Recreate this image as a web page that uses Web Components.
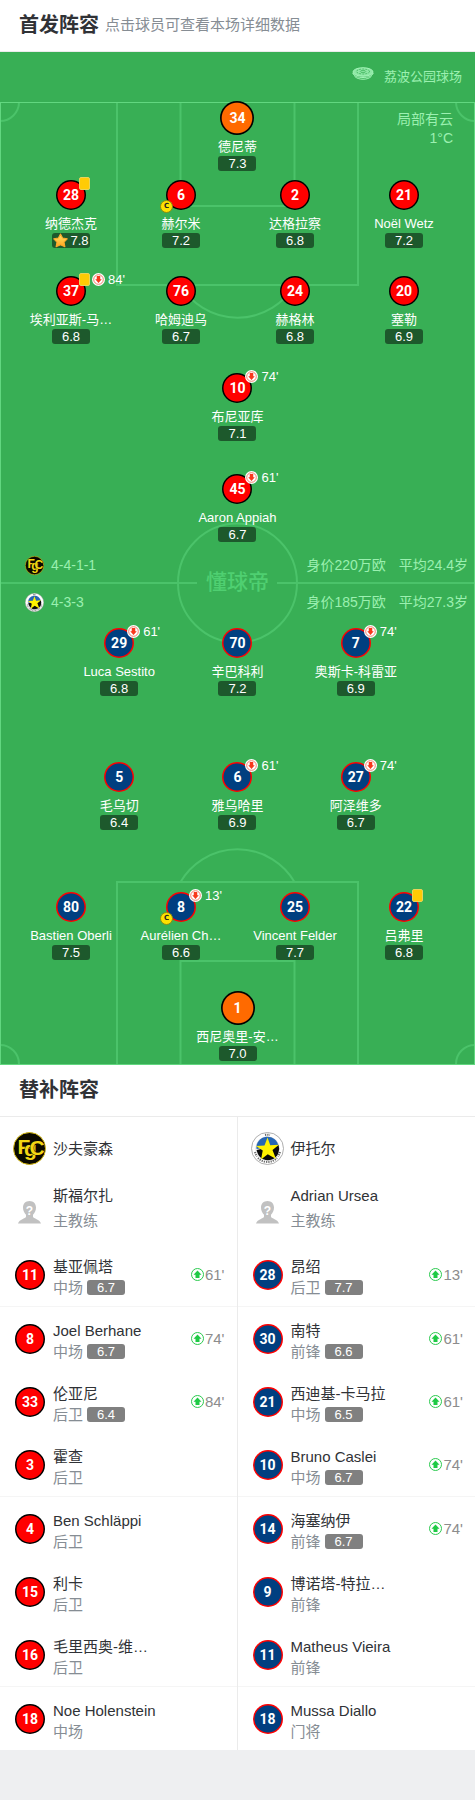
<!DOCTYPE html>
<html lang="zh-CN">
<head>
<meta charset="UTF-8">
<meta name="viewport" content="width=device-width, initial-scale=1">
<title>首发阵容</title>
<style>
  body {
    margin: 0;
    background: #eeeff1;
    color: #303236;
    font-family: "Liberation Sans", "Noto Sans CJK SC", sans-serif;
  }
</style>
</head>
<body>

<section-title>首发阵容<span slot="hint">点击球员可查看本场详细数据</span></section-title>

<lineup-pitch venue="荔波公园球场" weather="局部有云" temp="1°C">
  <pitch-half slot="home" side="home">
    <pitch-player keeper num="34" name="德尼蒂" rating="7.3"></pitch-player>
    <pitch-row cols="4">
      <pitch-player num="28" name="纳德杰克" rating="7.8" card star></pitch-player>
      <pitch-player num="6" name="赫尔米" rating="7.2" captain></pitch-player>
      <pitch-player num="2" name="达格拉察" rating="6.8"></pitch-player>
      <pitch-player num="21" name="Noël Wetz" rating="7.2"></pitch-player>
    </pitch-row>
    <pitch-row cols="4">
      <pitch-player num="37" name="埃利亚斯-马…" rating="6.8" card off="84'"></pitch-player>
      <pitch-player num="76" name="哈姆迪乌" rating="6.7"></pitch-player>
      <pitch-player num="24" name="赫格林" rating="6.8"></pitch-player>
      <pitch-player num="20" name="塞勒" rating="6.9"></pitch-player>
    </pitch-row>
    <pitch-player num="10" name="布尼亚库" rating="7.1" off="74'"></pitch-player>
    <pitch-player num="45" name="Aaron Appiah" rating="6.7" off="61'"></pitch-player>
    <team-strip logo="fcs" formation="4-4-1-1" value="身价220万欧" age="平均24.4岁"></team-strip>
  </pitch-half>

  <pitch-half slot="away" side="away">
    <team-strip logo="etoile" formation="4-3-3" value="身价185万欧" age="平均27.3岁"></team-strip>
    <pitch-row cols="3">
      <pitch-player num="29" name="Luca Sestito" rating="6.8" off="61'"></pitch-player>
      <pitch-player num="70" name="辛巴科利" rating="7.2"></pitch-player>
      <pitch-player num="7" name="奥斯卡-科雷亚" rating="6.9" off="74'"></pitch-player>
    </pitch-row>
    <pitch-row cols="3">
      <pitch-player num="5" name="毛乌切" rating="6.4"></pitch-player>
      <pitch-player num="6" name="雅乌哈里" rating="6.9" off="61'"></pitch-player>
      <pitch-player num="27" name="阿泽维多" rating="6.7" off="74'"></pitch-player>
    </pitch-row>
    <pitch-row cols="4">
      <pitch-player num="80" name="Bastien Oberli" rating="7.5"></pitch-player>
      <pitch-player num="8" name="Aurélien Ch…" rating="6.6" captain off="13'"></pitch-player>
      <pitch-player num="25" name="Vincent Felder" rating="7.7"></pitch-player>
      <pitch-player num="22" name="吕弗里" rating="6.8" card></pitch-player>
    </pitch-row>
    <pitch-player keeper num="1" name="西尼奥里-安…" rating="7.0"></pitch-player>
  </pitch-half>
</lineup-pitch>

<section-title>替补阵容</section-title>

<bench-board>
  <bench-team side="home" logo="fcs" name="沙夫豪森" coach="斯福尔扎">
    <bench-player num="11" name="基亚佩塔" role="中场" rating="6.7" on="61'"></bench-player>
    <bench-player num="8" name="Joel Berhane" role="中场" rating="6.7" on="74'"></bench-player>
    <bench-player num="33" name="伦亚尼" role="后卫" rating="6.4" on="84'"></bench-player>
    <bench-player num="3" name="霍查" role="后卫"></bench-player>
    <bench-player num="4" name="Ben Schläppi" role="后卫"></bench-player>
    <bench-player num="15" name="利卡" role="后卫"></bench-player>
    <bench-player num="16" name="毛里西奥-维…" role="后卫"></bench-player>
    <bench-player num="18" name="Noe Holenstein" role="中场"></bench-player>
  </bench-team>
  <bench-team side="away" logo="etoile" name="伊托尔" coach="Adrian Ursea">
    <bench-player num="28" name="昂绍" role="后卫" rating="7.7" on="13'"></bench-player>
    <bench-player num="30" name="南特" role="前锋" rating="6.6" on="61'"></bench-player>
    <bench-player num="21" name="西迪基-卡马拉" role="中场" rating="6.5" on="61'"></bench-player>
    <bench-player num="10" name="Bruno Caslei" role="中场" rating="6.7" on="74'"></bench-player>
    <bench-player num="14" name="海塞纳伊" role="前锋" rating="6.7" on="74'"></bench-player>
    <bench-player num="9" name="博诺塔-特拉…" role="前锋"></bench-player>
    <bench-player num="11" name="Matheus Vieira" role="前锋"></bench-player>
    <bench-player num="18" name="Mussa Diallo" role="门将"></bench-player>
  </bench-team>
</bench-board>

<script>
'use strict';

const ICONS = {
  off: `<svg viewBox="0 0 26 26"><circle cx="13" cy="13" r="13" fill="#fff"/>
    <circle cx="13" cy="13" r="9.6" fill="none" stroke="#f0705c" stroke-width="1.8"/>
    <path d="M9.500 6h7v6.500h3L13 20l-6.500-7.500h3z" fill="#f8381c"/></svg>`,
  on: `<svg viewBox="0 0 26 26"><circle cx="13" cy="13" r="12" fill="#fff" stroke="#2bc94e" stroke-width="2"/>
    <path d="M9 20h8v-6.500h4L13 5l-8 8.500h4z" fill="#1fca45"/></svg>`,
  star: `<svg viewBox="0 0 28 28"><defs><linearGradient id="g" x1="0" y1="0" x2="0" y2="1">
    <stop offset="0" stop-color="#ffe566"/><stop offset="1" stop-color="#ffa51f"/></linearGradient></defs>
    <path d="M14 2l4 7.500 8.600 1.300-6 6.200 1.600 8.600L14 22l-8.200 3.600 1.600-8.600-6-6.200L10 9.500z"
      fill="url(#g)" stroke="#fba92a" stroke-width="2" stroke-linejoin="round"/></svg>`,
  stadium: `<svg viewBox="0 0 44 26" fill="none" stroke="#a5f5b9" stroke-width="2">
    <ellipse cx="22" cy="10" rx="20" ry="8.5" fill="#8fe8a6"/>
    <ellipse cx="22" cy="9" rx="13" ry="5" stroke="#38af55" stroke-width="1.6" stroke-dasharray="4 2"/>
    <ellipse cx="22" cy="9" rx="5.5" ry="2" stroke="#38af55" stroke-width="1.4"/>
    <path d="M1.500 12c2 6 10 9 20.500 9s18.500-3 20.500-9"/>
    <path d="M5 18.500c4 4 10 6 17 6s13-2 17-6"/></svg>`,
  coach: `<svg viewBox="0 0 46 46"><path d="M23 0c-8 0-13 5.500-13 13 0 6 2.500 11 6 14.500v4C15 35.500 3 36 0 45h46c-3-9-15-9.500-16-13.500v-4c3.500-3.500 6-8.500 6-14.500C36 5.500 31 0 23 0z" fill="#c1c1c1"/>
    <text x="23" y="27" text-anchor="middle" font-size="24" font-weight="700" fill="#fff">?</text></svg>`
};

const LOGOS = {
  fcs: `<svg viewBox="0 0 66 66"><circle cx="33" cy="33" r="32" fill="#0b0900" stroke="#d9bc12" stroke-width="2"/>
    <text x="9 22 33" y="43 48 45" font-size="42" font-weight="700" fill="#f3d614"
      stroke="#0b0900" stroke-width="2" paint-order="stroke">FgC</text></svg>`,
  etoile: `<svg viewBox="0 0 66 66"><circle cx="33" cy="33" r="32" fill="#fff" stroke="#9b9b9b" stroke-width="1.6"/>
    <path d="M14 52a27 27 0 0 0 38 0M8 40a27 27 0 0 0 4 9M58 40a27 27 0 0 1-4 9M28 6a27 27 0 0 1 10 0"
      fill="none" stroke="#6b6b6b" stroke-width="4" stroke-dasharray="2.500 2"/>
    <circle cx="33" cy="33" r="23.500" fill="#fff" stroke="#c4c4c4"/>
    <path d="M11 34a22 22 0 0 1 44-5z" fill="#2666b4"/>
    <path d="M11 36l44-10a22 22 0 0 1-42 16z" fill="#090909"/>
    <path d="M33 11l5.500 15.500L56 25.500 43 36l7 18-16.500-9.500L20 55l3.500-18L10 28l17-1z" fill="#fff200"/></svg>`
};

const SIDES = `
  :host([side="home"]) { --shirt: #ff0000; --ring: #000; }
  :host([side="away"]) { --shirt: #003f80; --ring: #ff0000; }
`;

class BaseElement extends HTMLElement {
  connectedCallback() {
    if (!this.shadowRoot) this.attachShadow({ mode: 'open' });
    this.shadowRoot.innerHTML = `<style>* { box-sizing: border-box; } svg { display: block; flex: none; }${this.styles()}</style>${this.markup()}`;
  }
  attr(name) { return this.getAttribute(name) || ''; }
  styles() { return ''; }
  markup() { return '<slot></slot>'; }
}

/** 区块标题，hint 插槽放灰色说明文字 */
class SectionTitle extends BaseElement {
  styles() {
    return `
      :host { display: block; background: #fff; border-bottom: 1px solid #ebebeb; }
      header { display: flex; align-items: center; gap: 6px; height: 51px; padding: 0 19px 2px; }
      h2 { margin: 0; font-size: 20px; line-height: 28px; font-weight: 700; }
      ::slotted(span) { font-size: 15px; line-height: 28px; color: #868d94; }
    `;
  }
  markup() { return '<header><h2><slot></slot></h2><slot name="hint"></slot></header>'; }
}

/** 球衣号码圆点 */
class ShirtNumber extends BaseElement {
  styles() {
    return `
      :host {
        display: flex; align-items: center; justify-content: center; flex: none;
        width: var(--size, 30px); height: var(--size, 30px); border-radius: 50%;
        background: radial-gradient(closest-side, var(--shirt) 87%, var(--ring) 93%);
        color: #fff; font: 700 14px/16px Roboto, "Liberation Sans", sans-serif;
      }
    `;
  }
}

/** 评分标签 */
class RatingTag extends BaseElement {
  styles() {
    return `
      :host {
        display: flex; align-items: center; justify-content: center; gap: 2px; flex: none;
        width: 38px; height: 15px; border-radius: 3px;
        background: var(--tag, #1d592c); color: #fff; font-size: 13px; line-height: 15px;
      }
      svg { width: 15px; height: 15px; }
    `;
  }
  markup() { return `${this.hasAttribute('star') ? ICONS.star : ''}<slot></slot>`; }
}

class PitchPlayer extends BaseElement {
  styles() {
    return `
      :host { display: flex; justify-content: center; min-width: 0; }
      :host([keeper]) { --shirt: #ff6a00; --ring: #000; --size: 34px; }
      button {
        display: flex; flex-direction: column; align-items: center;
        padding: 0; border: 0; background: none; color: #fff; font: inherit; cursor: pointer;
      }
      .shirt { position: relative; margin-bottom: 5px; }
      :host([keeper]) .shirt { margin-bottom: 3px; }
      .name { font-size: 13px; line-height: 18px; white-space: nowrap; }
      .events {
        position: absolute; top: -3px; left: 23px;
        display: flex; align-items: center; gap: 2px;
        font-size: 13px; line-height: 13px;
      }
      .events svg { width: 13px; height: 13px; }
      .events time { padding-left: 1px; }
      .card { width: 11px; height: 13px; border: 1px solid #e9d35c; border-radius: 2px; background: #ffcb05; }
      .captain {
        position: absolute; top: 20px; left: -6px; width: 13px; height: 13px;
        border: 1px solid #8d8a12; border-radius: 50%; background: #ffe100; color: #222;
        font: 700 7px/11px "DejaVu Sans", sans-serif; text-align: center;
      }
    `;
  }
  markup() {
    const off = this.attr('off');
    return `
      <button type="button">
        <span class="shirt">
          <shirt-number>${this.attr('num')}</shirt-number>
          <span class="events">
            ${this.hasAttribute('card') ? '<i class="card"></i>' : ''}
            ${off ? `${ICONS.off}<time>${off}</time>` : ''}
          </span>
          ${this.hasAttribute('captain') ? '<span class="captain">C</span>' : ''}
        </span>
        <span class="name">${this.attr('name')}</span>
        <rating-tag ${this.hasAttribute('star') ? 'star' : ''}>${this.attr('rating')}</rating-tag>
      </button>
    `;
  }
}

class PitchRow extends BaseElement {
  styles() {
    return `
      :host { display: grid; }
      :host([cols="4"]) { grid-template-columns: 110fr 110fr 118fr 100fr; padding: 0 21px 0 16px; }
      :host([cols="3"]) { grid-template-columns: repeat(3, 1fr); padding: 0 60px; }
    `;
  }
}

/** 半场：每行球员一条轨道，阵型条贴着中线 */
class PitchHalf extends BaseElement {
  styles() {
    return `
      :host { display: grid; align-items: start; }
      :host([side="home"]) { grid-template-rows: 79px 96px 97px 101px 72px 37px; }
      :host([side="away"]) { grid-template-rows: 45px 134px 130px 99px 74px; }
      ${SIDES}
    `;
  }
}

class TeamStrip extends BaseElement {
  styles() {
    return `
      :host {
        display: flex; align-items: center; height: 38px; padding: 0 7px 0 25px;
        color: #9bf0b0; font-size: 14px; line-height: 20px;
      }
      svg { width: 19px; height: 19px; margin-right: 7px; }
      .value { margin-left: auto; margin-right: 13px; }
    `;
  }
  markup() {
    return `${LOGOS[this.attr('logo')]}<span>${this.attr('formation')}</span>
      <span class="value">${this.attr('value')}</span><span>${this.attr('age')}</span>`;
  }
}

class LineupPitch extends BaseElement {
  styles() {
    return `
      :host { display: block; background: #38af55; color: #9bf0b0; }
      .venue {
        display: flex; align-items: center; justify-content: flex-end; gap: 10px;
        height: 49px; padding-right: 13px; font-size: 13px; line-height: 20px;
      }
      .venue svg { width: 22px; height: 13px; margin-bottom: 6px; }
      .field { position: relative; }
      .lines { position: absolute; inset: 0; width: 100%; height: 100%; }
      .halves { position: relative; }
      .weather {
        position: absolute; top: 9px; right: 22px;
        font-size: 14px; line-height: 19px; text-align: right;
      }
      .mark {
        position: absolute; top: 481px; left: 50%; transform: translate(-50%, -50%);
        color: #4fcf71; font-size: 21px; line-height: 24px; font-weight: 500;
      }
    `;
  }
  markup() {
    return `
      <div class="venue">${ICONS.stadium}<span>${this.attr('venue')}</span></div>
      <div class="field">
        <svg class="lines" viewBox="0 0 475 964" preserveAspectRatio="none" fill="none" stroke="#4bc36a" stroke-width="2">
          <path d="M117 2v182h241V2M180.500 2v103h114V2M180.500 184a66 66 0 0 0 114 0"/>
          <path d="M117 963V781h241v182M180.500 963V860h114v103M180.500 781a66 66 0 0 1 114 0"/>
          <path d="M0 482h197M277 482h198"/>
          <circle cx="237.500" cy="482" r="59.500"/>
          <path d="M0 20A19 19 0 0 0 19 1M456 1A19 19 0 0 0 475 20M0 944A19 19 0 0 1 19 963M456 963A19 19 0 0 1 475 944"/>
          <rect x=".5" y="1.500" width="474" height="962" stroke="#62d780" stroke-width="1"/>
        </svg>
        <span class="mark">懂球帝</span>
        <div class="weather">${this.attr('weather')}<br>${this.attr('temp')}</div>
        <div class="halves"><slot name="home"></slot><slot name="away"></slot></div>
      </div>
    `;
  }
}

class BenchBoard extends BaseElement {
  styles() {
    return ':host { display: grid; grid-template-columns: 1fr 1fr; background: #fff; }';
  }
}

class BenchTeam extends BaseElement {
  styles() {
    return `
      :host { display: block; min-width: 0; }
      :host([side="home"]) { border-right: 1px solid #ebebeb; }
      ${SIDES}
      .row { display: flex; align-items: center; height: 63px; padding-left: 13px; font-size: 15px; }
      .row svg, .avatar { width: 33px; margin-right: 7px; }
      .row .avatar svg { width: 23px; height: 23px; margin: 2px auto 0; }
      p { margin: 0; line-height: 25px; }
      .coach .text { padding-bottom: 8px; }
      .job { color: #868d94; }
      ::slotted(bench-player:nth-of-type(3n + 1)) { border-bottom: 1px solid #f5f5f5; }
    `;
  }
  markup() {
    return `
      <div class="row">${LOGOS[this.attr('logo')]}<p>${this.attr('name')}</p></div>
      <div class="row coach">
        <div class="avatar">${ICONS.coach}</div>
        <div class="text"><p>${this.attr('coach')}</p><p class="job">主教练</p></div>
      </div>
      <slot></slot>
    `;
  }
}

class BenchPlayer extends BaseElement {
  styles() {
    return `
      :host {
        display: flex; align-items: center; height: 63px; padding: 0 12px 0 15px;
        font-size: 15px; line-height: 21px; --tag: #808080;
      }
      .text { flex: 1; min-width: 0; margin-left: 8px; padding-top: 4px; }
      .job { display: flex; align-items: center; gap: 4px; color: #868d94; }
      .on { display: flex; align-items: center; gap: 1px; color: #8c8c8c; }
      .on svg { width: 13px; height: 13px; }
    `;
  }
  markup() {
    const rating = this.attr('rating');
    const on = this.attr('on');
    return `
      <shirt-number>${this.attr('num')}</shirt-number>
      <div class="text">
        <div>${this.attr('name')}</div>
        <div class="job">${this.attr('role')}${rating ? `<rating-tag>${rating}</rating-tag>` : ''}</div>
      </div>
      ${on ? `<div class="on">${ICONS.on}<time>${on}</time></div>` : ''}
    `;
  }
}

customElements.define('section-title', SectionTitle);
customElements.define('shirt-number', ShirtNumber);
customElements.define('rating-tag', RatingTag);
customElements.define('pitch-player', PitchPlayer);
customElements.define('pitch-row', PitchRow);
customElements.define('pitch-half', PitchHalf);
customElements.define('team-strip', TeamStrip);
customElements.define('lineup-pitch', LineupPitch);
customElements.define('bench-board', BenchBoard);
customElements.define('bench-team', BenchTeam);
customElements.define('bench-player', BenchPlayer);
</script>
</body>
</html>
